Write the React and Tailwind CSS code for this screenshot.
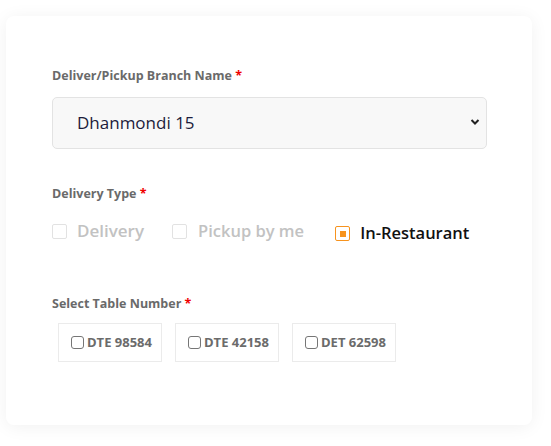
import { useState } from "react";

const TABLES = ["DTE 98584", "DTE 42158", "DET 62598"];

const Req = () => <span className="text-[#f00000]">*</span>;

const App = () => {
  const [branch, setBranch] = useState("Dhanmondi 15");

  return (
    <div className="min-h-[446px] bg-white pt-4 pl-[6px] font-['Open_Sans',sans-serif]">
      <div className="w-[526px] h-[409px] rounded-lg bg-white shadow-[0_2px_18px_rgba(0,0,0,0.06)] pt-[51px] pl-[46px] pr-[45px]">
        {/* Branch */}
        <label className="block text-[12.5px] leading-[18px] font-bold text-[#6a6a6a]">
          Deliver/Pickup Branch Name <Req />
        </label>
        <div className="relative mt-3">
          <select
            value={branch}
            onChange={(e) => setBranch(e.target.value)}
            className="w-full h-[52px] appearance-none rounded-[5px] border border-[#e3e3e3] bg-[#f8f8f8] pl-6 text-[17px] text-[#1c1c3c] outline-none"
          >
            <option>Dhanmondi 15</option>
            <option>Gulshan 2</option>
            <option>Uttara</option>
          </select>
          <svg
            className="pointer-events-none absolute right-[7px] top-[21px]"
            width="10"
            height="8"
            viewBox="0 0 10 8"
          >
            <path d="M1.5 2 L5 5.5 L8.5 2" fill="none" stroke="#222" strokeWidth="2" />
          </svg>
        </div>

        {/* Delivery type */}
        <label className="block mt-[36px] text-[12.5px] leading-[18px] font-bold text-[#6a6a6a]">
          Delivery Type <Req />
        </label>
        <div className="mt-[15px] flex items-center h-[26px]">
          <div className="flex items-center gap-[10px]">
            <span className="w-[15px] h-[15px] rounded-[2px] border border-[#e2e2e2] bg-white" />
            <span className="text-[17px] font-semibold text-[#c2c2c2]">Delivery</span>
          </div>
          <div className="ml-[28px] flex items-center gap-[11px]">
            <span className="w-[15px] h-[15px] rounded-[2px] border border-[#e2e2e2] bg-white" />
            <span className="text-[16.5px] font-semibold text-[#c2c2c2]">Pickup by me</span>
          </div>
          <div className="ml-[31px] mt-[5px] flex items-center gap-[10px]">
            <span className="w-[15px] h-[15px] rounded-[2px] border border-[#f7931e] bg-white flex items-center justify-center">
              <span className="w-[6px] h-[6px] bg-[#f7931e]" />
            </span>
            <span className="text-[16.5px] font-semibold text-[#111]">In-Restaurant</span>
          </div>
        </div>

        {/* Tables */}
        <label className="block mt-[51px] text-[12.5px] leading-[18px] font-bold text-[#6a6a6a]">
          Select Table Number <Req />
        </label>
        <div className="mt-[10px] ml-[6px] flex gap-[13px]">
          {TABLES.map((t) => (
            <label
              key={t}
              className="h-[39px] w-[104px] border border-[#ebebeb] flex items-center pl-3 gap-[3px]"
            >
              <span className="w-[13px] h-[13px] rounded-[3px] border border-[#767676] bg-white" />
              <span className="text-[13px] font-bold text-[#6b6b6b]">{t}</span>
            </label>
          ))}
        </div>
      </div>
    </div>
  );
};

export default App;
